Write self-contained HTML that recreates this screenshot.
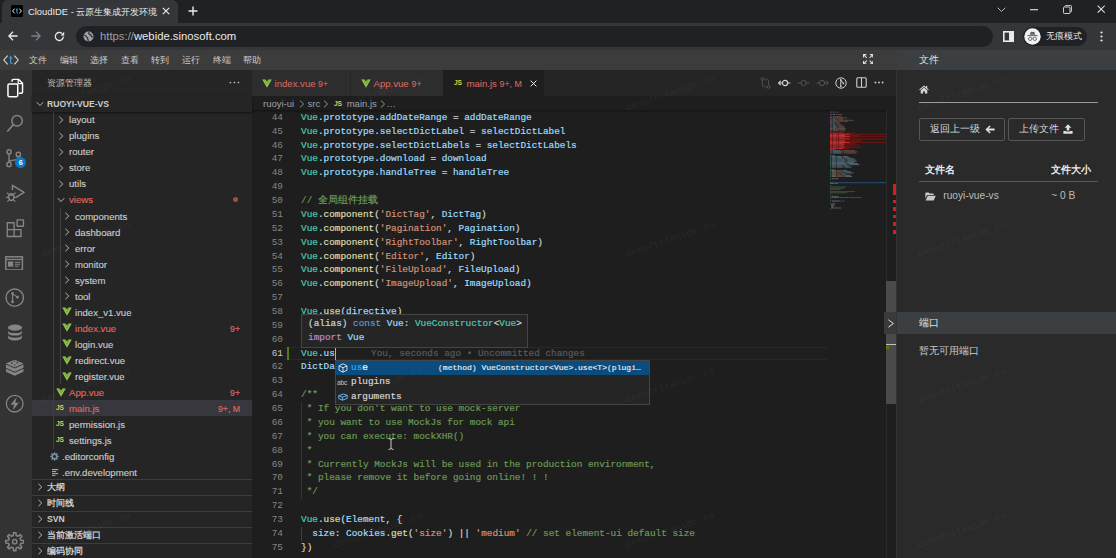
<!DOCTYPE html>
<html>
<head>
<meta charset="utf-8">
<title>CloudIDE</title>
<style>
*{box-sizing:border-box;margin:0;padding:0}
html,body{width:1116px;height:558px;overflow:hidden;background:#1e1e1e}
body{font-family:"Liberation Sans",sans-serif;color:#ccc;font-size:9.5px;position:relative}
.abs{position:absolute}
svg{display:block}
/* ---------- browser chrome ---------- */
#tabstrip{left:0;top:0;width:1116px;height:23px;background:#202124}
#tab{left:2px;top:0;width:176px;height:23px;background:#35363a;border-radius:6px 6px 0 0}
#tabtitle{left:28px;top:5px;width:130px;height:13px;line-height:13px;font-size:9.4px;color:#e8eaed;white-space:nowrap;overflow:hidden}
#toolbar{left:0;top:23px;width:1116px;height:27px;background:#35363a}
#omni{left:76px;top:26px;width:917px;height:21px;border-radius:10.5px;background:#202124}
#url{left:100px;top:29px;height:15px;line-height:15px;font-size:11.3px;color:#e8eaed;white-space:nowrap}
#url i{font-style:normal;color:#9aa0a6}
#incog{left:1023px;top:27px;width:64px;height:19px;border-radius:10px;background:#202124}
#incogtxt{left:1046px;top:30px;width:38px;height:13px;line-height:13px;font-size:8.8px;color:#e8eaed;white-space:nowrap;overflow:hidden}
/* ---------- IDE ---------- */
#menubar{left:0;top:50px;width:897px;height:20.4px;background:#3c3c3c;z-index:2}
.menu,.mz{z-index:3}
.menu{top:53px;height:14px;line-height:14px;font-size:9.4px;color:#ccc;width:20px;white-space:nowrap;overflow:hidden}
#activity{left:0;top:70px;width:32px;height:488px;background:#333333}
#sidebar{left:32px;top:70px;width:220px;height:488px;background:#252526}
#editor{left:252px;top:70px;width:645px;height:488px;background:#1e1e1e}
#rpanel{left:897px;top:50px;width:219px;height:508px;background:#2a2a2a}

.trow{height:16.05px;line-height:16.05px;font-size:9.6px;white-space:nowrap;-webkit-text-stroke:0.12px}
.tabt{top:77px;height:14px;line-height:14px;font-size:9.6px;white-space:nowrap}
.bc{top:97px;height:14px;line-height:14px;font-size:9.5px;color:#a0a0a0;white-space:nowrap}
.wm{height:12px;line-height:12px;font-family:"Liberation Mono",monospace;font-weight:bold;font-size:9.7px;color:rgba(255,255,255,.045);white-space:nowrap;transform-origin:0 100%;transform:rotate(-19deg);z-index:9;pointer-events:none}
.rt{white-space:nowrap;overflow:hidden}
.ln{left:252px;width:31px;text-align:right;height:13.87px;line-height:13.87px;font-family:"Liberation Mono",monospace;font-size:9.38px}
.cl{left:301px;height:13.87px;line-height:13.87px;font-family:"Liberation Mono",monospace;font-size:9.38px;white-space:pre;color:#d4d4d4;-webkit-text-stroke:0.2px}
.cl .t{color:#4ec9b0}.cl .v{color:#9cdcfe}.cl .f{color:#dcdcaa}.cl .s{color:#ce9178}.cl .c{color:#6a9955}.cl .k{color:#569cd6}.cl .p{color:#d4d4d4}.cl .i{color:#c586c0}
.cj{display:inline-block;width:63px;height:13.8px;overflow:hidden;vertical-align:top;font-size:10.4px}
</style>
</head>
<body>
<!-- browser chrome -->
<div id="tabstrip" class="abs"></div>
<div id="tab" class="abs"></div>
<div id="tabtitle" class="abs">CloudIDE - 云原生集成开发环境</div>
<div id="toolbar" class="abs"></div>
<div id="omni" class="abs"></div>
<div id="url" class="abs"><i>https://</i>webide.sinosoft.com</div>
<div id="incog" class="abs"></div>
<div id="incogtxt" class="abs">无痕模式</div>


<!-- chrome icons -->
<svg class="abs" style="left:11px;top:5px" width="12" height="12" viewBox="0 0 12 12"><rect width="12" height="12" rx="1.5" fill="#000"/><path d="M3.6 3.6 L1.6 6 L3.6 8.4 M8.4 3.6 L10.4 6 L8.4 8.4" stroke="#e8e8e8" stroke-width="1" fill="none"/><path d="M5.9 3.4 V7.2 Q5.9 8.3 7 8.2 M5 4.8 H7" stroke="#3a9ad9" stroke-width="1" fill="none"/></svg>
<svg class="abs" style="left:162px;top:7px" width="8" height="8" viewBox="0 0 8 8"><path d="M0.8 0.8 L7.2 7.2 M7.2 0.8 L0.8 7.2" stroke="#e8eaed" stroke-width="1.2" fill="none"/></svg>
<svg class="abs" style="left:188px;top:6px" width="10" height="10" viewBox="0 0 10 10"><path d="M5 0.5 V9.5 M0.5 5 H9.5" stroke="#e8eaed" stroke-width="1.4" fill="none"/></svg>
<!-- window controls -->
<svg class="abs" style="left:996.5px;top:6.8px" width="9" height="5.4" viewBox="0 0 10 6"><path d="M0.8 0.8 L5 5 L9.2 0.8" stroke="#c8cacc" stroke-width="1" fill="none"/></svg>
<svg class="abs" style="left:1030px;top:8.6px" width="8.4" height="2" viewBox="0 0 9 2"><rect width="9" height="1.3" fill="#d0d2d4"/></svg>
<svg class="abs" style="left:1063px;top:5px" width="9" height="9" viewBox="0 0 9 9"><path d="M2 1.8 V1.2 Q2 0.5 2.7 0.5 H7.8 Q8.5 0.5 8.5 1.2 V6.3 Q8.5 7 7.8 7 H7.2" stroke="#d0d2d4" stroke-width="0.9" fill="none"/><rect x="0.5" y="2" width="6.5" height="6.5" rx="0.8" stroke="#d0d2d4" stroke-width="1" fill="none"/></svg>
<svg class="abs" style="left:1097px;top:5px" width="8.4" height="8.4" viewBox="0 0 10 10"><path d="M0.8 0.8 L9.2 9.2 M9.2 0.8 L0.8 9.2" stroke="#e0e2e4" stroke-width="1.2" fill="none"/></svg>
<!-- nav -->
<svg class="abs" style="left:8px;top:31px" width="10" height="10" viewBox="0 0 10 10"><path d="M9.6 5 H1.2 M5 0.8 L0.8 5 L5 9.2" stroke="#e8eaed" stroke-width="1.3" fill="none"/></svg>
<svg class="abs" style="left:31px;top:31px" width="10" height="10" viewBox="0 0 10 10"><path d="M0.4 5 H8.8 M5 0.8 L9.2 5 L5 9.2" stroke="#7c7f84" stroke-width="1.3" fill="none"/></svg>
<svg class="abs" style="left:54px;top:31px" width="11" height="11" viewBox="0 0 11 11"><path d="M9.3 5.5 A4 4 0 1 1 8.1 2.6" stroke="#e8eaed" stroke-width="1.3" fill="none"/><path d="M10.2 0.8 V4.4 H6.6 Z" fill="#e8eaed"/></svg>
<svg class="abs" style="left:83px;top:31px" width="11" height="11" viewBox="0 0 11 11"><circle cx="5.5" cy="5.5" r="5" fill="#9aa0a6"/><path d="M1.2 4.2 Q3 4.6 3.6 6 Q4.6 6.2 4.8 7.6 Q4.6 9.2 5.6 10 M6.2 1 Q5 2.4 6.6 3.4 Q8.4 3.6 8.2 5.2 Q9 6.2 10 5.8" stroke="#202124" stroke-width="1.1" fill="none"/></svg>
<svg class="abs" style="left:1003px;top:31px" width="11" height="11" viewBox="0 0 11 11"><rect x="0.8" y="0.8" width="9.4" height="9.4" stroke="#e8eaed" stroke-width="1.6" fill="none"/><rect x="6" y="0.8" width="4.2" height="9.4" fill="#e8eaed"/></svg>
<svg class="abs" style="left:1024px;top:28px" width="17" height="17" viewBox="0 0 17 17"><circle cx="8.5" cy="8.5" r="8.2" fill="#f1f3f4"/><path d="M5.8 6.8 L6.6 4 Q6.8 3.5 7.3 3.7 L8.5 4.1 L9.7 3.7 Q10.2 3.5 10.4 4 L11.2 6.8 Z" fill="#5f6368"/><rect x="3.4" y="7.1" width="10.2" height="1" fill="#5f6368"/><circle cx="6.2" cy="10.8" r="1.7" stroke="#5f6368" stroke-width="0.9" fill="none"/><circle cx="10.8" cy="10.8" r="1.7" stroke="#5f6368" stroke-width="0.9" fill="none"/><path d="M7.8 10.5 Q8.5 10 9.2 10.5" stroke="#5f6368" stroke-width="0.8" fill="none"/></svg>
<svg class="abs" style="left:1100px;top:31px" width="3" height="11" viewBox="0 0 3 11"><circle cx="1.5" cy="1.5" r="1.1" fill="#e8eaed"/><circle cx="1.5" cy="5.5" r="1.1" fill="#e8eaed"/><circle cx="1.5" cy="9.5" r="1.1" fill="#e8eaed"/></svg>

<!-- IDE -->
<div id="menubar" class="abs"></div>
<div id="activity" class="abs"></div>
<div id="sidebar" class="abs"></div>
<div id="editor" class="abs"></div>
<div id="rpanel" class="abs"></div>
<div class="abs menu" style="left:29.0px">文件</div>
<div class="abs menu" style="left:59.6px">编辑</div>
<div class="abs menu" style="left:90.2px">选择</div>
<div class="abs menu" style="left:120.8px">查看</div>
<div class="abs menu" style="left:151.4px">转到</div>
<div class="abs menu" style="left:182.0px">运行</div>
<div class="abs menu" style="left:212.6px">终端</div>
<div class="abs menu" style="left:243.2px">帮助</div>
<svg class="abs mz" style="left:3px;top:54px" width="16" height="12" viewBox="0 0 16 12"><path d="M4.6 1.6 L0.8 6 L4.6 10.4 M11.4 1.6 L15.2 6 L11.4 10.4" stroke="#d8d8d8" stroke-width="1.1" fill="none"/><path d="M7.6 1.8 V8 Q7.6 9.8 9.6 9.4 M6.2 4 H9.4" stroke="#3a9ad9" stroke-width="1.2" fill="none"/></svg>
<svg class="abs mz" style="left:863px;top:53.6px" width="10.4" height="10.4" viewBox="0 0 11 11"><path d="M0.6 3.6 V0.6 H3.6 M7.4 0.6 H10.4 V3.6 M10.4 7.4 V10.4 H7.4 M3.6 10.4 H0.6 V7.4" stroke="#e0e0e0" stroke-width="1.2" fill="none"/><path d="M0.8 0.8 L4 4 M10.2 0.8 L7 4 M10.2 10.2 L7 7 M0.8 10.2 L4 7" stroke="#e0e0e0" stroke-width="1.1" fill="none"/></svg>
<div class="abs" style="left:47px;top:77px;width:46px;height:13px;line-height:13px;font-size:8.6px;color:#bbb;white-space:nowrap;overflow:hidden">资源管理器</div>
<svg class="abs" style="left:229px;top:81px" width="11" height="3" viewBox="0 0 11 3"><circle cx="1.4" cy="1.5" r="0.85" fill="#c5c5c5"/><circle cx="5.4" cy="1.5" r="0.85" fill="#c5c5c5"/><circle cx="9.4" cy="1.5" r="0.85" fill="#c5c5c5"/></svg>
<div class="abs" style="left:32px;top:96px;width:220px;height:15.5px;background:#252526;box-shadow:0 1px 2px rgba(0,0,0,.55)"></div>
<div class="abs" style="left:47px;top:97px;height:14px;line-height:14px;font-size:8.6px;font-weight:bold;color:#ccc;white-space:nowrap">RUOYI-VUE-VS</div>
<svg class="abs" style="left:36px;top:100px" width="8" height="8" viewBox="0 0 8 8"><path d="M0.8 2.2 L4 5.6 L7.2 2.2" stroke="#c5c5c5" stroke-width="0.9" fill="none"/></svg>
<svg class="abs" style="left:57px;top:115.5px" width="8" height="8" viewBox="0 0 8 8"><path d="M2.4 0.8 L5.8 4 L2.4 7.2" stroke="#c5c5c5" stroke-width="0.9" fill="none"/></svg>
<div class="abs trow" style="left:69px;top:112.2px;color:#cccccc">layout</div>
<svg class="abs" style="left:57px;top:131.6px" width="8" height="8" viewBox="0 0 8 8"><path d="M2.4 0.8 L5.8 4 L2.4 7.2" stroke="#c5c5c5" stroke-width="0.9" fill="none"/></svg>
<div class="abs trow" style="left:69px;top:128.2px;color:#cccccc">plugins</div>
<svg class="abs" style="left:57px;top:147.6px" width="8" height="8" viewBox="0 0 8 8"><path d="M2.4 0.8 L5.8 4 L2.4 7.2" stroke="#c5c5c5" stroke-width="0.9" fill="none"/></svg>
<div class="abs trow" style="left:69px;top:144.3px;color:#cccccc">router</div>
<svg class="abs" style="left:57px;top:163.7px" width="8" height="8" viewBox="0 0 8 8"><path d="M2.4 0.8 L5.8 4 L2.4 7.2" stroke="#c5c5c5" stroke-width="0.9" fill="none"/></svg>
<div class="abs trow" style="left:69px;top:160.3px;color:#cccccc">store</div>
<svg class="abs" style="left:57px;top:179.7px" width="8" height="8" viewBox="0 0 8 8"><path d="M2.4 0.8 L5.8 4 L2.4 7.2" stroke="#c5c5c5" stroke-width="0.9" fill="none"/></svg>
<div class="abs trow" style="left:69px;top:176.4px;color:#cccccc">utils</div>
<svg class="abs" style="left:57px;top:195.8px" width="8" height="8" viewBox="0 0 8 8"><path d="M0.8 2.2 L4 5.6 L7.2 2.2" stroke="#c5c5c5" stroke-width="0.9" fill="none"/></svg>
<div class="abs trow" style="left:69px;top:192.4px;color:#e2695f">views</div>
<div class="abs" style="left:233px;top:197.1px;width:5.4px;height:5.4px;border-radius:3px;background:#9b4f49"></div>
<svg class="abs" style="left:63px;top:211.8px" width="8" height="8" viewBox="0 0 8 8"><path d="M2.4 0.8 L5.8 4 L2.4 7.2" stroke="#c5c5c5" stroke-width="0.9" fill="none"/></svg>
<div class="abs trow" style="left:75px;top:208.5px;color:#cccccc">components</div>
<svg class="abs" style="left:63px;top:227.9px" width="8" height="8" viewBox="0 0 8 8"><path d="M2.4 0.8 L5.8 4 L2.4 7.2" stroke="#c5c5c5" stroke-width="0.9" fill="none"/></svg>
<div class="abs trow" style="left:75px;top:224.6px;color:#cccccc">dashboard</div>
<svg class="abs" style="left:63px;top:243.9px" width="8" height="8" viewBox="0 0 8 8"><path d="M2.4 0.8 L5.8 4 L2.4 7.2" stroke="#c5c5c5" stroke-width="0.9" fill="none"/></svg>
<div class="abs trow" style="left:75px;top:240.6px;color:#cccccc">error</div>
<svg class="abs" style="left:63px;top:260.0px" width="8" height="8" viewBox="0 0 8 8"><path d="M2.4 0.8 L5.8 4 L2.4 7.2" stroke="#c5c5c5" stroke-width="0.9" fill="none"/></svg>
<div class="abs trow" style="left:75px;top:256.7px;color:#cccccc">monitor</div>
<svg class="abs" style="left:63px;top:276.0px" width="8" height="8" viewBox="0 0 8 8"><path d="M2.4 0.8 L5.8 4 L2.4 7.2" stroke="#c5c5c5" stroke-width="0.9" fill="none"/></svg>
<div class="abs trow" style="left:75px;top:272.7px;color:#cccccc">system</div>
<svg class="abs" style="left:63px;top:292.1px" width="8" height="8" viewBox="0 0 8 8"><path d="M2.4 0.8 L5.8 4 L2.4 7.2" stroke="#c5c5c5" stroke-width="0.9" fill="none"/></svg>
<div class="abs trow" style="left:75px;top:288.8px;color:#cccccc">tool</div>
<svg class="abs" style="left:62px;top:307.3px" width="10" height="9" viewBox="0 0 10 9"><path d="M0.2 0.4 H3.6 L5 2.4 L6.4 0.4 H9.8 L5 8.8 Z" fill="#8dc149"/><path d="M2.4 0.4 L5 4.9 L7.6 0.4" stroke="#6b9a33" stroke-width="0.7" fill="none"/></svg>
<div class="abs trow" style="left:75px;top:304.8px;color:#cccccc">index_v1.vue</div>
<svg class="abs" style="left:62px;top:323.4px" width="10" height="9" viewBox="0 0 10 9"><path d="M0.2 0.4 H3.6 L5 2.4 L6.4 0.4 H9.8 L5 8.8 Z" fill="#8dc149"/><path d="M2.4 0.4 L5 4.9 L7.6 0.4" stroke="#6b9a33" stroke-width="0.7" fill="none"/></svg>
<div class="abs trow" style="left:75px;top:320.8px;color:#e2695f">index.vue</div>
<div class="abs trow" style="right:876px;top:320.8px;color:#e2695f;font-size:8.7px">9+</div>
<svg class="abs" style="left:62px;top:339.4px" width="10" height="9" viewBox="0 0 10 9"><path d="M0.2 0.4 H3.6 L5 2.4 L6.4 0.4 H9.8 L5 8.8 Z" fill="#8dc149"/><path d="M2.4 0.4 L5 4.9 L7.6 0.4" stroke="#6b9a33" stroke-width="0.7" fill="none"/></svg>
<div class="abs trow" style="left:75px;top:336.9px;color:#cccccc">login.vue</div>
<svg class="abs" style="left:62px;top:355.5px" width="10" height="9" viewBox="0 0 10 9"><path d="M0.2 0.4 H3.6 L5 2.4 L6.4 0.4 H9.8 L5 8.8 Z" fill="#8dc149"/><path d="M2.4 0.4 L5 4.9 L7.6 0.4" stroke="#6b9a33" stroke-width="0.7" fill="none"/></svg>
<div class="abs trow" style="left:75px;top:352.9px;color:#cccccc">redirect.vue</div>
<svg class="abs" style="left:62px;top:371.5px" width="10" height="9" viewBox="0 0 10 9"><path d="M0.2 0.4 H3.6 L5 2.4 L6.4 0.4 H9.8 L5 8.8 Z" fill="#8dc149"/><path d="M2.4 0.4 L5 4.9 L7.6 0.4" stroke="#6b9a33" stroke-width="0.7" fill="none"/></svg>
<div class="abs trow" style="left:75px;top:369.0px;color:#cccccc">register.vue</div>
<svg class="abs" style="left:56px;top:387.6px" width="10" height="9" viewBox="0 0 10 9"><path d="M0.2 0.4 H3.6 L5 2.4 L6.4 0.4 H9.8 L5 8.8 Z" fill="#8dc149"/><path d="M2.4 0.4 L5 4.9 L7.6 0.4" stroke="#6b9a33" stroke-width="0.7" fill="none"/></svg>
<div class="abs trow" style="left:69px;top:385.1px;color:#e2695f">App.vue</div>
<div class="abs trow" style="right:876px;top:385.1px;color:#e2695f;font-size:8.7px">9+</div>
<div class="abs" style="left:32px;top:400.4px;width:220px;height:16.05px;background:#37373d"></div>
<div class="abs" style="left:56px;top:403.0px;width:11px;height:10px;line-height:10px;font-size:7.7px;font-weight:bold;color:#d6cf45;letter-spacing:-0.3px;transform:scaleX(0.86);transform-origin:0 0">JS</div>
<div class="abs trow" style="left:69px;top:401.1px;color:#e2695f">main.js</div>
<div class="abs trow" style="right:876px;top:401.1px;color:#e2695f;font-size:8.7px">9+, M</div>
<div class="abs" style="left:56px;top:419.09999999999997px;width:11px;height:10px;line-height:10px;font-size:7.7px;font-weight:bold;color:#d6cf45;letter-spacing:-0.3px;transform:scaleX(0.86);transform-origin:0 0">JS</div>
<div class="abs trow" style="left:69px;top:417.1px;color:#cccccc">permission.js</div>
<div class="abs" style="left:56px;top:435.09999999999997px;width:11px;height:10px;line-height:10px;font-size:7.7px;font-weight:bold;color:#d6cf45;letter-spacing:-0.3px;transform:scaleX(0.86);transform-origin:0 0">JS</div>
<div class="abs trow" style="left:69px;top:433.2px;color:#cccccc">settings.js</div>
<svg class="abs" style="left:49.6px;top:452.0px" width="9" height="9" viewBox="0 0 9 9"><path d="M3.83 0.25 L5.17 0.25 L5.22 1.49 L6.12 1.86 L7.03 1.02 L7.98 1.97 L7.14 2.88 L7.51 3.78 L8.75 3.83 L8.75 5.17 L7.51 5.22 L7.14 6.12 L7.98 7.03 L7.03 7.98 L6.12 7.14 L5.22 7.51 L5.17 8.75 L3.83 8.75 L3.78 7.51 L2.88 7.14 L1.97 7.98 L1.02 7.03 L1.86 6.12 L1.49 5.22 L0.25 5.17 L0.25 3.83 L1.49 3.78 L1.86 2.88 L1.02 1.97 L1.97 1.02 L2.88 1.86 L3.78 1.49 Z M4.5 2.9 A1.6 1.6 0 1 0 4.51 2.9 Z" fill="#7494a4" fill-rule="evenodd"/></svg>
<div class="abs trow" style="left:62px;top:449.2px;color:#cccccc">.editorconfig</div>
<svg class="abs" style="left:52.2px;top:469.0px" width="7" height="7.4" viewBox="0 0 7 7.4"><path d="M0 0.6 H6.2 M0 2.6 H4.2 M0 4.7 H6.2 M0 6.7 H3.4" stroke="#c8c8c8" stroke-width="0.9" fill="none"/></svg>
<div class="abs trow" style="left:62px;top:465.3px;color:#cccccc">.env.development</div>
<div class="abs" style="left:53px;top:111.5px;width:1px;height:337px;background:#3f3f41"></div>
<div class="abs" style="left:60px;top:207.8px;width:1px;height:176.6px;background:#3f3f41"></div>
<div class="abs" style="left:32px;top:478.8px;width:220px;height:1px;background:#3c3c3d"></div>
<svg class="abs" style="left:36px;top:483.0px" width="8" height="8" viewBox="0 0 8 8"><path d="M2.4 0.8 L5.8 4 L2.4 7.2" stroke="#c5c5c5" stroke-width="0.9" fill="none"/></svg>
<div class="abs" style="left:47px;top:479.8px;height:15px;line-height:15px;width:19px;overflow:hidden;font-size:8.6px;font-weight:bold;color:#ccc;white-space:nowrap">大纲</div>
<div class="abs" style="left:32px;top:494.9px;width:220px;height:1px;background:#3c3c3d"></div>
<svg class="abs" style="left:36px;top:499.1px" width="8" height="8" viewBox="0 0 8 8"><path d="M2.4 0.8 L5.8 4 L2.4 7.2" stroke="#c5c5c5" stroke-width="0.9" fill="none"/></svg>
<div class="abs" style="left:47px;top:495.9px;height:15px;line-height:15px;width:28px;overflow:hidden;font-size:8.6px;font-weight:bold;color:#ccc;white-space:nowrap">时间线</div>
<div class="abs" style="left:32px;top:510.9px;width:220px;height:1px;background:#3c3c3d"></div>
<svg class="abs" style="left:36px;top:515.1px" width="8" height="8" viewBox="0 0 8 8"><path d="M2.4 0.8 L5.8 4 L2.4 7.2" stroke="#c5c5c5" stroke-width="0.9" fill="none"/></svg>
<div class="abs" style="left:47px;top:511.9px;height:15px;line-height:15px;width:32px;overflow:hidden;font-size:8.6px;font-weight:bold;color:#ccc;white-space:nowrap">SVN</div>
<div class="abs" style="left:32px;top:527.0px;width:220px;height:1px;background:#3c3c3d"></div>
<svg class="abs" style="left:36px;top:531.2px" width="8" height="8" viewBox="0 0 8 8"><path d="M2.4 0.8 L5.8 4 L2.4 7.2" stroke="#c5c5c5" stroke-width="0.9" fill="none"/></svg>
<div class="abs" style="left:47px;top:528.0px;height:15px;line-height:15px;width:54px;overflow:hidden;font-size:8.6px;font-weight:bold;color:#ccc;white-space:nowrap">当前激活端口</div>
<div class="abs" style="left:32px;top:543.0px;width:220px;height:1px;background:#3c3c3d"></div>
<svg class="abs" style="left:36px;top:547.2px" width="8" height="8" viewBox="0 0 8 8"><path d="M2.4 0.8 L5.8 4 L2.4 7.2" stroke="#c5c5c5" stroke-width="0.9" fill="none"/></svg>
<div class="abs" style="left:47px;top:544.0px;height:15px;line-height:15px;width:36px;overflow:hidden;font-size:8.6px;font-weight:bold;color:#ccc;white-space:nowrap">编码协同</div>
<svg class="abs" style="left:4.7px;top:77.7px" width="20.5" height="20.5" viewBox="0 0 18 18"><path d="M6.2 3.4 V2.2 Q6.2 1.2 7.2 1.2 H12 L15.4 4.6 V12.4 Q15.4 13.4 14.4 13.4 H12.2" stroke="#fff" stroke-width="1.3" fill="none"/><path d="M11.6 1.4 V5 H15.2" stroke="#fff" stroke-width="1.1" fill="none"/><rect x="2.6" y="5.2" width="8.6" height="11.2" rx="1.2" stroke="#fff" stroke-width="1.3" fill="none"/></svg>
<svg class="abs" style="left:4.7px;top:112.7px" width="20.5" height="20.5" viewBox="0 0 18 18"><circle cx="10.6" cy="6.8" r="4.6" stroke="#858585" stroke-width="1.3" fill="none"/><path d="M7.4 10.2 L2 16.2" stroke="#858585" stroke-width="1.4" fill="none"/></svg>
<svg class="abs" style="left:3.7px;top:147.7px" width="20.5" height="20.5" viewBox="0 0 18 18"><circle cx="4.4" cy="3.4" r="1.9" stroke="#858585" stroke-width="1.2" fill="none"/><circle cx="4.4" cy="14.4" r="1.9" stroke="#858585" stroke-width="1.2" fill="none"/><circle cx="12.6" cy="5.6" r="1.9" stroke="#858585" stroke-width="1.2" fill="none"/><path d="M4.4 5.3 V12.5 M12.6 7.5 Q12.6 10.4 9 10.6 Q4.6 10.8 4.4 12.4" stroke="#858585" stroke-width="1.2" fill="none"/></svg>
<div class="abs" style="left:15px;top:156.5px;width:11.4px;height:11.4px;border-radius:6px;background:#007acc;color:#fff;font-size:7.4px;font-weight:bold;line-height:11.4px;text-align:center">6</div>
<svg class="abs" style="left:3.6px;top:182.7px" width="22.8" height="20.5" viewBox="0 0 20 18"><path d="M7.4 6.2 V2 L17.6 8.2 L10.6 12.6" stroke="#858585" stroke-width="1.3" fill="none" stroke-linejoin="round"/><ellipse cx="6.4" cy="12.4" rx="2.3" ry="3" stroke="#858585" stroke-width="1.2" fill="none"/><path d="M4.4 10 L2.6 8.6 M8.4 10 L10.2 8.6 M4.1 12.6 H1.8 M8.7 12.6 H11 M4.6 14.8 L2.8 16.4 M8.2 14.8 L10 16.4 M4.6 10.6 H8.2" stroke="#858585" stroke-width="1" fill="none"/></svg>
<svg class="abs" style="left:4.9px;top:217.7px" width="20.5" height="20.5" viewBox="0 0 18 18"><path d="M2 10.2 H14 V16.2 H2 Z M8 10.2 V16.2 M2 10.2 V4.2 H8 V10.2" stroke="#858585" stroke-width="1.2" fill="none"/><rect x="10.6" y="1.6" width="5.6" height="5.6" rx="0.5" stroke="#858585" stroke-width="1.2" fill="none"/></svg>
<svg class="abs" style="left:5.4px;top:255.6px" width="18.2" height="14.8" viewBox="0 0 16 13"><rect x="0.7" y="0.7" width="14.6" height="11.6" stroke="#858585" stroke-width="1.3" fill="none"/><path d="M0.7 3 H15.3" stroke="#858585" stroke-width="1.1"/><rect x="2.6" y="4.8" width="4.6" height="4.6" fill="#858585"/><path d="M8.6 5.4 H13.4 M8.6 7.2 H13.4 M8.6 9 H12" stroke="#858585" stroke-width="0.9"/></svg>
<svg class="abs" style="left:4.8px;top:288.3px" width="19.4" height="19.4" viewBox="0 0 17 17"><circle cx="8.5" cy="8.5" r="7.6" stroke="#858585" stroke-width="1.2" fill="none"/><circle cx="6.6" cy="4.8" r="1.2" fill="#858585"/><circle cx="6.6" cy="12.2" r="1.2" fill="#858585"/><circle cx="11" cy="8" r="1.2" fill="#858585"/><path d="M6.6 4.8 V12.2 M6.6 5.2 L11 8" stroke="#858585" stroke-width="1" fill="none"/></svg>
<svg class="abs" style="left:6.5px;top:324.4px" width="16.0" height="17.1" viewBox="0 0 14 15"><ellipse cx="7" cy="3.2" rx="6.2" ry="2.7" fill="#858585"/><path d="M0.8 5.2 Q0.8 8 7 8 Q13.2 8 13.2 5.2 V7.2 Q13.2 10.2 7 10.2 Q0.8 10.2 0.8 7.2 Z" fill="#858585"/><path d="M0.8 9.2 Q0.8 12 7 12 Q13.2 12 13.2 9.2 V11.4 Q13.2 14.4 7 14.4 Q0.8 14.4 0.8 11.4 Z" fill="#858585"/></svg>
<svg class="abs" style="left:5.0px;top:359.4px" width="19.4" height="17.1" viewBox="0 0 17 15"><path d="M8.5 0.6 L16.2 3.9 L8.5 7.4 L0.8 3.9 Z" fill="#858585"/><path d="M0.8 4.9 L8.5 8.4 L16.2 4.9 V7.6 L8.5 11.1 L0.8 7.6 Z" fill="#858585"/><path d="M0.8 8.6 L8.5 12.1 L16.2 8.6 V11.2 L8.5 14.7 L0.8 11.2 Z" fill="#858585"/><circle cx="6" cy="3.7" r="0.8" fill="#444"/><circle cx="10.8" cy="3.3" r="0.8" fill="#444"/><circle cx="8.6" cy="5.2" r="0.7" fill="#444"/><circle cx="8.4" cy="2" r="0.6" fill="#444"/></svg>
<svg class="abs" style="left:5.2px;top:393.6px" width="19.4" height="19.4" viewBox="0 0 17 17"><circle cx="8.5" cy="8.5" r="7.3" stroke="#858585" stroke-width="1.15" fill="none"/><path d="M10.2 2.8 L4.8 9.4 H8 L6.8 14.2 L12.2 7.6 H9 Z" fill="#858585"/></svg>
<svg class="abs" style="left:5.1px;top:532.3px" width="19.4" height="19.4" viewBox="0 0 17 17"><path d="M7.45 0.67 L9.55 0.67 L9.81 3.05 L11.43 3.73 L13.29 2.22 L14.78 3.71 L13.27 5.57 L13.95 7.19 L16.33 7.45 L16.33 9.55 L13.95 9.81 L13.27 11.43 L14.78 13.29 L13.29 14.78 L11.43 13.27 L9.81 13.95 L9.55 16.33 L7.45 16.33 L7.19 13.95 L5.57 13.27 L3.71 14.78 L2.22 13.29 L3.73 11.43 L3.05 9.81 L0.67 9.55 L0.67 7.45 L3.05 7.19 L3.73 5.57 L2.22 3.71 L3.71 2.22 L5.57 3.73 L7.19 3.05 Z" stroke="#858585" stroke-width="1.35" fill="none" stroke-linejoin="round"/><circle cx="8.5" cy="8.5" r="1.9" stroke="#858585" stroke-width="1.25" fill="none"/></svg>
<div class="abs" style="left:252px;top:70px;width:645px;height:26px;background:#252526"></div>
<div class="abs" style="left:252px;top:70px;width:98.5px;height:26px;background:#2d2d2d;border-right:1px solid #252526"></div>
<div class="abs" style="left:350.5px;top:70px;width:93px;height:26px;background:#2d2d2d;border-right:1px solid #252526"></div>
<div class="abs" style="left:443px;top:70px;width:101px;height:26px;background:#1e1e1e"></div>
<svg class="abs" style="left:262px;top:78.5px" width="10" height="9" viewBox="0 0 10 9"><path d="M0.2 0.4 H3.6 L5 2.4 L6.4 0.4 H9.8 L5 8.8 Z" fill="#8dc149"/><path d="M2.4 0.4 L5 4.9 L7.6 0.4" stroke="#6b9a33" stroke-width="0.7" fill="none"/></svg>
<div class="abs tabt" style="left:274.5px;color:#dd6b60">index.vue</div><div class="abs tabt" style="left:318px;color:#dd6b60;font-size:8.8px">9+</div>
<svg class="abs" style="left:361px;top:78.5px" width="10" height="9" viewBox="0 0 10 9"><path d="M0.2 0.4 H3.6 L5 2.4 L6.4 0.4 H9.8 L5 8.8 Z" fill="#8dc149"/><path d="M2.4 0.4 L5 4.9 L7.6 0.4" stroke="#6b9a33" stroke-width="0.7" fill="none"/></svg>
<div class="abs tabt" style="left:373.5px;color:#dd6b60">App.vue</div><div class="abs tabt" style="left:411.5px;color:#dd6b60;font-size:8.8px">9+</div>
<div class="abs" style="left:454px;top:77.9px;width:11px;height:10px;line-height:10px;font-size:7.7px;font-weight:bold;color:#d6cf45;letter-spacing:-0.3px;transform:scaleX(0.86);transform-origin:0 0">JS</div>
<div class="abs tabt" style="left:466.5px;color:#e2695f">main.js</div><div class="abs tabt" style="left:499.5px;color:#e2695f;font-size:8.8px">9+, M</div>
<svg class="abs" style="left:529.5px;top:79.5px" width="7" height="7" viewBox="0 0 7 7"><path d="M0.6 0.6 L6.4 6.4 M6.4 0.6 L0.6 6.4" stroke="#e8e8e8" stroke-width="1" fill="none"/></svg>
<svg class="abs" style="left:759.7px;top:76.5px" width="11" height="12" viewBox="0 0 11 12"><circle cx="2.4" cy="2" r="1.4" stroke="#555555" stroke-width="0.9" fill="none"/><circle cx="8.6" cy="10" r="1.4" stroke="#555555" stroke-width="0.9" fill="none"/><path d="M2.4 3.4 V8 Q2.4 10 4.6 10 M8.6 8.6 V4 Q8.6 2 6.4 2 M5.6 0.8 L4.4 2 L5.6 3.2 M5.4 8.8 L6.6 10 L5.4 11.2" stroke="#555555" stroke-width="0.9" fill="none"/></svg>
<svg class="abs" style="left:777.8px;top:78.5px" width="13" height="8" viewBox="0 0 13 8"><circle cx="7" cy="4" r="2.6" stroke="#d0d0d0" stroke-width="1.2" fill="none"/><path d="M0.8 4 H4.4 M9.6 4 H12.4 M2.8 1.8 L0.6 4 L2.8 6.2" stroke="#d0d0d0" stroke-width="1.1" fill="none"/></svg>
<svg class="abs" style="left:796.9px;top:78.5px" width="13" height="8" viewBox="0 0 13 8"><circle cx="6.5" cy="4" r="2.6" stroke="#555555" stroke-width="1" fill="none"/><path d="M0.6 4 H3.9 M9.1 4 H12.4" stroke="#555555" stroke-width="1" fill="none"/></svg>
<svg class="abs" style="left:815.5px;top:78.5px" width="13" height="8" viewBox="0 0 13 8"><circle cx="6" cy="4" r="2.6" stroke="#555555" stroke-width="1" fill="none"/><path d="M0.6 4 H3.4 M8.6 4 H12.2 M10.2 1.8 L12.4 4 L10.2 6.2" stroke="#555555" stroke-width="1" fill="none"/></svg>
<svg class="abs" style="left:835.4px;top:76.5px" width="12" height="12" viewBox="0 0 12 12"><circle cx="6" cy="6" r="5.2" stroke="#d0d0d0" stroke-width="1" fill="none"/><path d="M5.8 2.4 V9.6 M5.8 3 L8.4 6.4" stroke="#d0d0d0" stroke-width="1" fill="none"/><circle cx="5.8" cy="2.8" r="0.8" fill="#d0d0d0"/><circle cx="5.8" cy="9.4" r="0.8" fill="#d0d0d0"/><circle cx="8.4" cy="6.4" r="0.8" fill="#d0d0d0"/></svg>
<svg class="abs" style="left:855.5px;top:77.0px" width="11" height="11" viewBox="0 0 11 11"><rect x="0.8" y="0.8" width="9.4" height="9.4" rx="1" stroke="#d0d0d0" stroke-width="1.1" fill="none"/><path d="M5.5 0.8 V10.2" stroke="#d0d0d0" stroke-width="1.1"/></svg>
<svg class="abs" style="left:874.0px;top:81.3px" width="10" height="3" viewBox="0 0 10 3"><circle cx="1.4" cy="1.5" r="0.9" fill="#d0d0d0"/><circle cx="5" cy="1.5" r="0.9" fill="#d0d0d0"/><circle cx="8.6" cy="1.5" r="0.9" fill="#d0d0d0"/></svg>
<div class="abs bc" style="left:263px">ruoyi-ui</div>
<svg class="abs" style="left:298px;top:100.3px" width="8" height="8" viewBox="0 0 8 8"><path d="M2 0.6 L5.6 4 L2 7.4" stroke="#a0a0a0" stroke-width="0.9" fill="none"/></svg>
<div class="abs bc" style="left:307.5px">src</div>
<svg class="abs" style="left:321.5px;top:100.3px" width="8" height="8" viewBox="0 0 8 8"><path d="M2 0.6 L5.6 4 L2 7.4" stroke="#a0a0a0" stroke-width="0.9" fill="none"/></svg>
<div class="abs" style="left:334px;top:99.2px;width:11px;height:10px;line-height:10px;font-size:7.7px;font-weight:bold;color:#d6cf45;letter-spacing:-0.3px;transform:scaleX(0.86);transform-origin:0 0">JS</div>
<div class="abs bc" style="left:346.7px">main.js</div>
<svg class="abs" style="left:378.5px;top:100.3px" width="8" height="8" viewBox="0 0 8 8"><path d="M2 0.6 L5.6 4 L2 7.4" stroke="#a0a0a0" stroke-width="0.9" fill="none"/></svg>
<div class="abs bc" style="left:386.5px">…</div>
<div class="abs" style="left:252px;top:110px;width:634px;height:3px;background:linear-gradient(rgba(0,0,0,.35) 0,rgba(0,0,0,0) 100%)"></div>
<div class="abs" style="left:289px;top:346.6px;width:538px;height:13.87px;border-top:1px solid #282828;border-bottom:1px solid #282828"></div>
<div class="abs" style="left:287px;top:346.6px;width:2px;height:13.87px;background:#587c0c"></div>
<div class="abs ln" style="top:110.80px;color:#858585">44</div>
<div class="abs cl" style="top:110.80px"><span class="t">Vue</span><span class="p">.</span><span class="v">prototype</span><span class="p">.</span><span class="v">addDateRange</span><span class="p"> = </span><span class="v">addDateRange</span></div>
<div class="abs ln" style="top:124.67px;color:#858585">45</div>
<div class="abs cl" style="top:124.67px"><span class="t">Vue</span><span class="p">.</span><span class="v">prototype</span><span class="p">.</span><span class="v">selectDictLabel</span><span class="p"> = </span><span class="v">selectDictLabel</span></div>
<div class="abs ln" style="top:138.54px;color:#858585">46</div>
<div class="abs cl" style="top:138.54px"><span class="t">Vue</span><span class="p">.</span><span class="v">prototype</span><span class="p">.</span><span class="v">selectDictLabels</span><span class="p"> = </span><span class="v">selectDictLabels</span></div>
<div class="abs ln" style="top:152.41px;color:#858585">47</div>
<div class="abs cl" style="top:152.41px"><span class="t">Vue</span><span class="p">.</span><span class="v">prototype</span><span class="p">.</span><span class="v">download</span><span class="p"> = </span><span class="v">download</span></div>
<div class="abs ln" style="top:166.28px;color:#858585">48</div>
<div class="abs cl" style="top:166.28px"><span class="t">Vue</span><span class="p">.</span><span class="v">prototype</span><span class="p">.</span><span class="v">handleTree</span><span class="p"> = </span><span class="v">handleTree</span></div>
<div class="abs ln" style="top:180.15px;color:#858585">49</div>
<div class="abs ln" style="top:194.02px;color:#858585">50</div>
<div class="abs cl" style="top:194.02px"><span class="c">// <span class="cj">全局组件挂载</span></span></div>
<div class="abs ln" style="top:207.89px;color:#858585">51</div>
<div class="abs cl" style="top:207.89px"><span class="t">Vue</span><span class="p">.</span><span class="f">component</span><span class="p">(</span><span class="s">'DictTag'</span><span class="p">, </span><span class="v">DictTag</span><span class="p">)</span></div>
<div class="abs ln" style="top:221.76px;color:#858585">52</div>
<div class="abs cl" style="top:221.76px"><span class="t">Vue</span><span class="p">.</span><span class="f">component</span><span class="p">(</span><span class="s">'Pagination'</span><span class="p">, </span><span class="v">Pagination</span><span class="p">)</span></div>
<div class="abs ln" style="top:235.63px;color:#858585">53</div>
<div class="abs cl" style="top:235.63px"><span class="t">Vue</span><span class="p">.</span><span class="f">component</span><span class="p">(</span><span class="s">'RightToolbar'</span><span class="p">, </span><span class="v">RightToolbar</span><span class="p">)</span></div>
<div class="abs ln" style="top:249.50px;color:#858585">54</div>
<div class="abs cl" style="top:249.50px"><span class="t">Vue</span><span class="p">.</span><span class="f">component</span><span class="p">(</span><span class="s">'Editor'</span><span class="p">, </span><span class="v">Editor</span><span class="p">)</span></div>
<div class="abs ln" style="top:263.37px;color:#858585">55</div>
<div class="abs cl" style="top:263.37px"><span class="t">Vue</span><span class="p">.</span><span class="f">component</span><span class="p">(</span><span class="s">'FileUpload'</span><span class="p">, </span><span class="v">FileUpload</span><span class="p">)</span></div>
<div class="abs ln" style="top:277.24px;color:#858585">56</div>
<div class="abs cl" style="top:277.24px"><span class="t">Vue</span><span class="p">.</span><span class="f">component</span><span class="p">(</span><span class="s">'ImageUpload'</span><span class="p">, </span><span class="v">ImageUpload</span><span class="p">)</span></div>
<div class="abs ln" style="top:291.11px;color:#858585">57</div>
<div class="abs ln" style="top:304.98px;color:#858585">58</div>
<div class="abs cl" style="top:304.98px"><span class="t">Vue</span><span class="p">.</span><span class="f">use</span><span class="p">(</span><span class="v">directive</span><span class="p">)</span></div>
<div class="abs ln" style="top:318.85px;color:#858585">59</div>
<div class="abs ln" style="top:332.72px;color:#858585">60</div>
<div class="abs ln" style="top:346.59px;color:#c6c6c6">61</div>
<div class="abs cl" style="top:346.59px"><span class="t">Vue</span><span class="p">.</span><span class="v">us</span></div>
<div class="abs ln" style="top:360.46px;color:#858585">62</div>
<div class="abs cl" style="top:360.46px"><span class="v">DictData</span><span class="p">.</span><span class="f">install</span><span class="p">()</span></div>
<div class="abs ln" style="top:374.33px;color:#858585">63</div>
<div class="abs ln" style="top:388.20px;color:#858585">64</div>
<div class="abs cl" style="top:388.20px"><span class="c">/**</span></div>
<div class="abs ln" style="top:402.07px;color:#858585">65</div>
<div class="abs cl" style="top:402.07px"><span class="c"> * If you don't want to use mock-server</span></div>
<div class="abs ln" style="top:415.94px;color:#858585">66</div>
<div class="abs cl" style="top:415.94px"><span class="c"> * you want to use MockJs for mock api</span></div>
<div class="abs ln" style="top:429.81px;color:#858585">67</div>
<div class="abs cl" style="top:429.81px"><span class="c"> * you can execute: mockXHR()</span></div>
<div class="abs ln" style="top:443.68px;color:#858585">68</div>
<div class="abs cl" style="top:443.68px"><span class="c"> *</span></div>
<div class="abs ln" style="top:457.55px;color:#858585">69</div>
<div class="abs cl" style="top:457.55px"><span class="c"> * Currently MockJs will be used in the production environment,</span></div>
<div class="abs ln" style="top:471.42px;color:#858585">70</div>
<div class="abs cl" style="top:471.42px"><span class="c"> * please remove it before going online! ! !</span></div>
<div class="abs ln" style="top:485.29px;color:#858585">71</div>
<div class="abs cl" style="top:485.29px"><span class="c"> */</span></div>
<div class="abs ln" style="top:499.16px;color:#858585">72</div>
<div class="abs ln" style="top:513.03px;color:#858585">73</div>
<div class="abs cl" style="top:513.03px"><span class="t">Vue</span><span class="p">.</span><span class="f">use</span><span class="p">(</span><span class="v">Element</span><span class="p">, {</span></div>
<div class="abs ln" style="top:526.90px;color:#858585">74</div>
<div class="abs cl" style="top:526.90px"><span class="p">  </span><span class="v">size</span><span class="p">: </span><span class="v">Cookies</span><span class="p">.</span><span class="f">get</span><span class="p">(</span><span class="s">'size'</span><span class="p">) || </span><span class="s">'medium'</span><span class="p"> </span><span class="c">// set element-ui default size</span></div>
<div class="abs ln" style="top:540.77px;color:#858585">75</div>
<div class="abs cl" style="top:540.77px"><span class="p">})</span></div>
<div class="abs" style="left:334.8px;top:347.6px;width:1px;height:12px;background:#aeafad"></div>
<div class="abs cl" style="left:371px;top:346.59px;color:#5a5a5a">You, seconds ago • Uncommitted changes</div>
<div class="abs" style="left:301px;top:402.1px;width:1px;height:97.1px;background:#333"></div>
<div class="abs" style="left:301px;top:526.9px;width:1px;height:13.9px;background:#404040"></div>
<div class="abs" style="left:301px;top:313.5px;width:226.5px;height:34px;background:#252526;border:1px solid #454545"></div>
<div class="abs cl" style="left:308px;top:317.3px"><span class="p">(alias) </span><span class="k">const</span> <span class="v">Vue</span><span class="p">: </span><span class="t">VueConstructor</span><span class="p">&lt;</span><span class="t">Vue</span><span class="p">&gt;</span></div>
<div class="abs cl" style="left:308px;top:331.4px"><span class="i">import</span> <span class="v">Vue</span></div>
<div class="abs" style="left:335px;top:360.3px;width:315px;height:44.8px;background:#252526;border:1px solid #454545"></div>
<div class="abs" style="left:336px;top:361.3px;width:313px;height:14px;background:#0a4c7d"></div>
<svg class="abs" style="left:337.5px;top:363.3px" width="10" height="10" viewBox="0 0 10 10"><path d="M5 0.8 L9 2.8 V7.2 L5 9.2 L1 7.2 V2.8 Z M1 2.8 L5 4.8 L9 2.8 M5 4.8 V9.2" stroke="#e8e8e8" stroke-width="0.9" fill="none" stroke-linejoin="round"/></svg>
<div class="abs cl" style="left:351px;top:361.4px;color:#fff"><span style="color:#2aaaff">us</span>e</div>
<div class="abs cl" style="left:438px;top:361.2px;color:#e6e6e6;font-size:8.05px">(method) VueConstructor&lt;Vue&gt;.use&lt;T&gt;(plugi…</div>
<div class="abs" style="left:337px;top:376.8px;font-size:6.6px;line-height:12px;height:12px;color:#c5c5c5;letter-spacing:-0.2px">abc</div>
<div class="abs cl" style="left:351px;top:375.4px;color:#d4d4d4">plugins</div>
<svg class="abs" style="left:337.5px;top:391.8px" width="10" height="10" viewBox="0 0 10 10"><path d="M0.8 3.6 L5.6 2 L9.2 3.4 V6.4 L4.4 8.2 L0.8 6.6 Z M0.8 3.6 L4.4 5.2 L9.2 3.4 M4.4 5.2 V8.2" stroke="#75beff" stroke-width="0.9" fill="none" stroke-linejoin="round"/></svg>
<div class="abs cl" style="left:351px;top:389.9px;color:#d4d4d4">arguments</div>
<svg class="abs" style="left:387.5px;top:437.5px" width="6" height="12" viewBox="0 0 6 12"><path d="M0.5 0.6 Q2.2 0.6 3 1.6 Q3.8 0.6 5.5 0.6 M3 1.6 V10.4 M0.5 11.4 Q2.2 11.4 3 10.4 Q3.8 11.4 5.5 11.4" stroke="#e0e0e0" stroke-width="0.9" fill="none"/></svg>
<svg class="abs" style="left:0;top:0" width="1116" height="558" viewBox="0 0 1116 558" ><rect x="830.0" y="111.60" width="2.0" height="0.95" fill="#9a6a98" opacity="0.55"/><rect x="832.6" y="111.60" width="1.3" height="0.95" fill="#7aa9c4" opacity="0.55"/><rect x="834.5" y="111.60" width="1.3" height="0.95" fill="#9a6a98" opacity="0.55"/><rect x="836.4" y="111.60" width="2.0" height="0.95" fill="#a0725f" opacity="0.55"/><rect x="830.0" y="113.94" width="2.0" height="0.95" fill="#9a6a98" opacity="0.55"/><rect x="832.6" y="113.94" width="2.6" height="0.95" fill="#7aa9c4" opacity="0.55"/><rect x="835.8" y="113.94" width="1.3" height="0.95" fill="#9a6a98" opacity="0.55"/><rect x="837.7" y="113.94" width="4.6" height="0.95" fill="#a0725f" opacity="0.55"/><rect x="830.0" y="116.28" width="2.0" height="0.95" fill="#9a6a98" opacity="0.55"/><rect x="832.6" y="116.28" width="9.2" height="0.95" fill="#a0725f" opacity="0.55"/><rect x="830.0" y="117.45" width="2.0" height="0.95" fill="#9a6a98" opacity="0.55"/><rect x="832.6" y="117.45" width="14.5" height="0.95" fill="#a0725f" opacity="0.55"/><rect x="830.0" y="118.62" width="2.0" height="0.95" fill="#9a6a98" opacity="0.55"/><rect x="832.6" y="118.62" width="2.6" height="0.95" fill="#7aa9c4" opacity="0.55"/><rect x="835.8" y="118.62" width="1.3" height="0.95" fill="#9a6a98" opacity="0.55"/><rect x="837.7" y="118.62" width="5.3" height="0.95" fill="#a0725f" opacity="0.55"/><rect x="830.0" y="119.79" width="2.0" height="0.95" fill="#9a6a98" opacity="0.55"/><rect x="832.6" y="119.79" width="4.0" height="0.95" fill="#7aa9c4" opacity="0.55"/><rect x="837.1" y="119.79" width="1.3" height="0.95" fill="#9a6a98" opacity="0.55"/><rect x="839.1" y="119.79" width="14.5" height="0.95" fill="#a0725f" opacity="0.55"/><rect x="830.0" y="120.96" width="2.0" height="0.95" fill="#9a6a98" opacity="0.55"/><rect x="832.6" y="120.96" width="11.9" height="0.95" fill="#557a46" opacity="0.55"/><rect x="845.1" y="120.96" width="2.6" height="0.95" fill="#a0725f" opacity="0.55"/><rect x="830.0" y="122.13" width="2.0" height="0.95" fill="#9a6a98" opacity="0.55"/><rect x="832.6" y="122.13" width="1.3" height="0.95" fill="#7aa9c4" opacity="0.55"/><rect x="834.5" y="122.13" width="1.3" height="0.95" fill="#9a6a98" opacity="0.55"/><rect x="836.4" y="122.13" width="2.6" height="0.95" fill="#a0725f" opacity="0.55"/><rect x="830.0" y="123.30" width="2.0" height="0.95" fill="#9a6a98" opacity="0.55"/><rect x="832.6" y="123.30" width="2.0" height="0.95" fill="#7aa9c4" opacity="0.55"/><rect x="835.2" y="123.30" width="1.3" height="0.95" fill="#9a6a98" opacity="0.55"/><rect x="837.1" y="123.30" width="3.3" height="0.95" fill="#a0725f" opacity="0.55"/><rect x="830.0" y="124.47" width="2.0" height="0.95" fill="#9a6a98" opacity="0.55"/><rect x="832.6" y="124.47" width="2.6" height="0.95" fill="#7aa9c4" opacity="0.55"/><rect x="835.8" y="124.47" width="1.3" height="0.95" fill="#9a6a98" opacity="0.55"/><rect x="837.7" y="124.47" width="4.0" height="0.95" fill="#a0725f" opacity="0.55"/><rect x="830.0" y="125.64" width="2.0" height="0.95" fill="#9a6a98" opacity="0.55"/><rect x="832.6" y="125.64" width="3.3" height="0.95" fill="#7aa9c4" opacity="0.55"/><rect x="836.5" y="125.64" width="1.3" height="0.95" fill="#9a6a98" opacity="0.55"/><rect x="838.4" y="125.64" width="5.9" height="0.95" fill="#a0725f" opacity="0.55"/><rect x="830.0" y="126.81" width="2.0" height="0.95" fill="#9a6a98" opacity="0.55"/><rect x="832.6" y="126.81" width="4.0" height="0.95" fill="#7aa9c4" opacity="0.55"/><rect x="837.1" y="126.81" width="1.3" height="0.95" fill="#9a6a98" opacity="0.55"/><rect x="839.1" y="126.81" width="5.3" height="0.95" fill="#a0725f" opacity="0.55"/><rect x="830.0" y="127.98" width="2.0" height="0.95" fill="#9a6a98" opacity="0.55"/><rect x="832.6" y="127.98" width="2.6" height="0.95" fill="#7aa9c4" opacity="0.55"/><rect x="835.8" y="127.98" width="1.3" height="0.95" fill="#9a6a98" opacity="0.55"/><rect x="837.7" y="127.98" width="7.9" height="0.95" fill="#a0725f" opacity="0.55"/><rect x="830.0" y="129.15" width="2.0" height="0.95" fill="#9a6a98" opacity="0.55"/><rect x="832.6" y="129.15" width="6.6" height="0.95" fill="#a0725f" opacity="0.55"/><rect x="839.8" y="129.15" width="5.3" height="0.95" fill="#557a46" opacity="0.55"/><rect x="830.0" y="130.32" width="2.0" height="0.95" fill="#9a6a98" opacity="0.55"/><rect x="832.6" y="130.32" width="5.9" height="0.95" fill="#a0725f" opacity="0.55"/><rect x="839.1" y="130.32" width="6.6" height="0.95" fill="#557a46" opacity="0.55"/><rect x="830" y="132.56" width="25.8" height="1.17" fill="#6a1414"/><rect x="830.0" y="132.66" width="2.0" height="0.95" fill="#d83a3a" opacity="0.85"/><rect x="832.6" y="132.66" width="4.0" height="0.95" fill="#d83a3a" opacity="0.85"/><rect x="837.1" y="132.66" width="1.3" height="0.95" fill="#d83a3a" opacity="0.85"/><rect x="839.1" y="132.66" width="4.6" height="0.95" fill="#d83a3a" opacity="0.85"/><rect x="830" y="133.73" width="56.0" height="1.17" fill="#6a1414"/><rect x="830.0" y="133.83" width="2.0" height="0.95" fill="#d83a3a" opacity="0.85"/><rect x="832.6" y="133.83" width="4.0" height="0.95" fill="#d83a3a" opacity="0.85"/><rect x="837.1" y="133.83" width="1.3" height="0.95" fill="#d83a3a" opacity="0.85"/><rect x="839.1" y="133.83" width="10.6" height="0.95" fill="#d83a3a" opacity="0.85"/><rect x="830" y="134.90" width="31.0" height="1.17" fill="#6a1414"/><rect x="830.0" y="135.00" width="2.0" height="0.95" fill="#d83a3a" opacity="0.85"/><rect x="832.6" y="135.00" width="4.0" height="0.95" fill="#d83a3a" opacity="0.85"/><rect x="837.1" y="135.00" width="1.3" height="0.95" fill="#d83a3a" opacity="0.85"/><rect x="839.1" y="135.00" width="5.9" height="0.95" fill="#d83a3a" opacity="0.85"/><rect x="830" y="136.07" width="56.0" height="1.17" fill="#6a1414"/><rect x="830.0" y="136.17" width="2.0" height="0.95" fill="#d83a3a" opacity="0.85"/><rect x="832.6" y="136.17" width="4.0" height="0.95" fill="#d83a3a" opacity="0.85"/><rect x="837.1" y="136.17" width="1.3" height="0.95" fill="#d83a3a" opacity="0.85"/><rect x="839.1" y="136.17" width="10.6" height="0.95" fill="#d83a3a" opacity="0.85"/><rect x="830" y="137.24" width="29.2" height="1.17" fill="#6a1414"/><rect x="830.0" y="137.34" width="2.0" height="0.95" fill="#d83a3a" opacity="0.85"/><rect x="832.6" y="137.34" width="4.0" height="0.95" fill="#d83a3a" opacity="0.85"/><rect x="837.1" y="137.34" width="1.3" height="0.95" fill="#d83a3a" opacity="0.85"/><rect x="839.1" y="137.34" width="5.3" height="0.95" fill="#d83a3a" opacity="0.85"/><rect x="830" y="138.41" width="56.0" height="1.17" fill="#6a1414"/><rect x="830.0" y="138.51" width="2.0" height="0.95" fill="#d83a3a" opacity="0.85"/><rect x="832.6" y="138.51" width="4.0" height="0.95" fill="#d83a3a" opacity="0.85"/><rect x="837.1" y="138.51" width="1.3" height="0.95" fill="#d83a3a" opacity="0.85"/><rect x="839.1" y="138.51" width="10.6" height="0.95" fill="#d83a3a" opacity="0.85"/><rect x="830" y="139.58" width="32.7" height="1.17" fill="#6a1414"/><rect x="830.0" y="139.68" width="2.0" height="0.95" fill="#d83a3a" opacity="0.85"/><rect x="832.6" y="139.68" width="4.0" height="0.95" fill="#d83a3a" opacity="0.85"/><rect x="837.1" y="139.68" width="1.3" height="0.95" fill="#d83a3a" opacity="0.85"/><rect x="839.1" y="139.68" width="5.9" height="0.95" fill="#d83a3a" opacity="0.85"/><rect x="830" y="140.75" width="31.0" height="1.17" fill="#6a1414"/><rect x="830.0" y="140.85" width="2.0" height="0.95" fill="#d83a3a" opacity="0.85"/><rect x="832.6" y="140.85" width="4.0" height="0.95" fill="#d83a3a" opacity="0.85"/><rect x="837.1" y="140.85" width="1.3" height="0.95" fill="#d83a3a" opacity="0.85"/><rect x="839.1" y="140.85" width="5.9" height="0.95" fill="#d83a3a" opacity="0.85"/><rect x="830" y="141.92" width="56.0" height="1.17" fill="#6a1414"/><rect x="830.0" y="142.02" width="2.0" height="0.95" fill="#d83a3a" opacity="0.85"/><rect x="832.6" y="142.02" width="4.0" height="0.95" fill="#d83a3a" opacity="0.85"/><rect x="837.1" y="142.02" width="1.3" height="0.95" fill="#d83a3a" opacity="0.85"/><rect x="839.1" y="142.02" width="10.6" height="0.95" fill="#d83a3a" opacity="0.85"/><rect x="830" y="143.09" width="25.8" height="1.17" fill="#6a1414"/><rect x="830.0" y="143.19" width="2.0" height="0.95" fill="#d83a3a" opacity="0.85"/><rect x="832.6" y="143.19" width="4.0" height="0.95" fill="#d83a3a" opacity="0.85"/><rect x="837.1" y="143.19" width="1.3" height="0.95" fill="#d83a3a" opacity="0.85"/><rect x="839.1" y="143.19" width="4.6" height="0.95" fill="#d83a3a" opacity="0.85"/><rect x="830" y="144.26" width="29.2" height="1.17" fill="#6a1414"/><rect x="830.0" y="144.36" width="2.0" height="0.95" fill="#d83a3a" opacity="0.85"/><rect x="832.6" y="144.36" width="4.0" height="0.95" fill="#d83a3a" opacity="0.85"/><rect x="837.1" y="144.36" width="1.3" height="0.95" fill="#d83a3a" opacity="0.85"/><rect x="839.1" y="144.36" width="5.3" height="0.95" fill="#d83a3a" opacity="0.85"/><rect x="830" y="145.43" width="24.1" height="1.17" fill="#6a1414"/><rect x="830.0" y="145.53" width="2.0" height="0.95" fill="#d83a3a" opacity="0.85"/><rect x="832.6" y="145.53" width="4.0" height="0.95" fill="#d83a3a" opacity="0.85"/><rect x="837.1" y="145.53" width="1.3" height="0.95" fill="#d83a3a" opacity="0.85"/><rect x="839.1" y="145.53" width="4.6" height="0.95" fill="#d83a3a" opacity="0.85"/><rect x="830" y="146.60" width="31.0" height="1.17" fill="#6a1414"/><rect x="830.0" y="146.70" width="2.0" height="0.95" fill="#d83a3a" opacity="0.85"/><rect x="832.6" y="146.70" width="4.0" height="0.95" fill="#d83a3a" opacity="0.85"/><rect x="837.1" y="146.70" width="1.3" height="0.95" fill="#d83a3a" opacity="0.85"/><rect x="839.1" y="146.70" width="5.9" height="0.95" fill="#d83a3a" opacity="0.85"/><rect x="830" y="147.77" width="20.6" height="1.17" fill="#6a1414"/><rect x="830.0" y="147.87" width="2.0" height="0.95" fill="#d83a3a" opacity="0.85"/><rect x="832.6" y="147.87" width="4.0" height="0.95" fill="#d83a3a" opacity="0.85"/><rect x="837.1" y="147.87" width="1.3" height="0.95" fill="#d83a3a" opacity="0.85"/><rect x="839.1" y="147.87" width="4.0" height="0.95" fill="#d83a3a" opacity="0.85"/><rect x="830.0" y="149.04" width="5.3" height="0.95" fill="#557a46" opacity="0.55"/><rect x="830.0" y="150.21" width="2.0" height="0.95" fill="#9a6a98" opacity="0.55"/><rect x="832.6" y="150.21" width="7.9" height="0.95" fill="#7aa9c4" opacity="0.55"/><rect x="841.1" y="150.21" width="1.3" height="0.95" fill="#9a6a98" opacity="0.55"/><rect x="843.0" y="150.21" width="11.9" height="0.95" fill="#a0725f" opacity="0.55"/><rect x="830.0" y="151.38" width="2.0" height="0.95" fill="#9a6a98" opacity="0.55"/><rect x="832.6" y="151.38" width="9.2" height="0.95" fill="#7aa9c4" opacity="0.55"/><rect x="842.4" y="151.38" width="1.3" height="0.95" fill="#9a6a98" opacity="0.55"/><rect x="844.3" y="151.38" width="13.2" height="0.95" fill="#a0725f" opacity="0.55"/><rect x="830.0" y="152.55" width="2.0" height="0.95" fill="#9a6a98" opacity="0.55"/><rect x="832.6" y="152.55" width="8.6" height="0.95" fill="#7aa9c4" opacity="0.55"/><rect x="841.8" y="152.55" width="1.3" height="0.95" fill="#9a6a98" opacity="0.55"/><rect x="843.7" y="152.55" width="12.5" height="0.95" fill="#a0725f" opacity="0.55"/><rect x="830.0" y="154.89" width="5.3" height="0.95" fill="#557a46" opacity="0.55"/><rect x="830.0" y="156.06" width="1.3" height="0.95" fill="#3f9f8c" opacity="0.55"/><rect x="831.9" y="156.06" width="4.0" height="0.95" fill="#7aa9c4" opacity="0.55"/><rect x="836.5" y="156.06" width="4.6" height="0.95" fill="#7aa9c4" opacity="0.55"/><rect x="841.7" y="156.06" width="0.7" height="0.95" fill="#9a9a9a" opacity="0.55"/><rect x="843.0" y="156.06" width="4.6" height="0.95" fill="#7aa9c4" opacity="0.55"/><rect x="830.0" y="157.23" width="1.3" height="0.95" fill="#3f9f8c" opacity="0.55"/><rect x="831.9" y="157.23" width="4.0" height="0.95" fill="#7aa9c4" opacity="0.55"/><rect x="836.5" y="157.23" width="5.9" height="0.95" fill="#7aa9c4" opacity="0.55"/><rect x="843.0" y="157.23" width="0.7" height="0.95" fill="#9a9a9a" opacity="0.55"/><rect x="844.3" y="157.23" width="5.9" height="0.95" fill="#7aa9c4" opacity="0.55"/><rect x="830.0" y="158.40" width="1.3" height="0.95" fill="#3f9f8c" opacity="0.55"/><rect x="831.9" y="158.40" width="4.0" height="0.95" fill="#7aa9c4" opacity="0.55"/><rect x="836.5" y="158.40" width="7.9" height="0.95" fill="#7aa9c4" opacity="0.55"/><rect x="845.0" y="158.40" width="0.7" height="0.95" fill="#9a9a9a" opacity="0.55"/><rect x="846.3" y="158.40" width="7.9" height="0.95" fill="#7aa9c4" opacity="0.55"/><rect x="830.0" y="159.57" width="1.3" height="0.95" fill="#3f9f8c" opacity="0.55"/><rect x="831.9" y="159.57" width="4.0" height="0.95" fill="#7aa9c4" opacity="0.55"/><rect x="836.5" y="159.57" width="8.6" height="0.95" fill="#7aa9c4" opacity="0.55"/><rect x="845.7" y="159.57" width="0.7" height="0.95" fill="#9a9a9a" opacity="0.55"/><rect x="846.9" y="159.57" width="8.6" height="0.95" fill="#7aa9c4" opacity="0.55"/><rect x="830.0" y="160.74" width="1.3" height="0.95" fill="#3f9f8c" opacity="0.55"/><rect x="831.9" y="160.74" width="4.0" height="0.95" fill="#7aa9c4" opacity="0.55"/><rect x="836.5" y="160.74" width="9.2" height="0.95" fill="#7aa9c4" opacity="0.55"/><rect x="846.3" y="160.74" width="0.7" height="0.95" fill="#9a9a9a" opacity="0.55"/><rect x="847.6" y="160.74" width="9.2" height="0.95" fill="#7aa9c4" opacity="0.55"/><rect x="830.0" y="161.91" width="1.3" height="0.95" fill="#3f9f8c" opacity="0.55"/><rect x="831.9" y="161.91" width="4.0" height="0.95" fill="#7aa9c4" opacity="0.55"/><rect x="836.5" y="161.91" width="7.9" height="0.95" fill="#7aa9c4" opacity="0.55"/><rect x="845.0" y="161.91" width="0.7" height="0.95" fill="#9a9a9a" opacity="0.55"/><rect x="846.3" y="161.91" width="7.9" height="0.95" fill="#7aa9c4" opacity="0.55"/><rect x="830.0" y="163.08" width="1.3" height="0.95" fill="#3f9f8c" opacity="0.55"/><rect x="831.9" y="163.08" width="4.0" height="0.95" fill="#7aa9c4" opacity="0.55"/><rect x="836.5" y="163.08" width="9.9" height="0.95" fill="#7aa9c4" opacity="0.55"/><rect x="847.0" y="163.08" width="0.7" height="0.95" fill="#9a9a9a" opacity="0.55"/><rect x="848.2" y="163.08" width="9.9" height="0.95" fill="#7aa9c4" opacity="0.55"/><rect x="830.0" y="164.25" width="1.3" height="0.95" fill="#3f9f8c" opacity="0.55"/><rect x="831.9" y="164.25" width="4.0" height="0.95" fill="#7aa9c4" opacity="0.55"/><rect x="836.5" y="164.25" width="10.6" height="0.95" fill="#7aa9c4" opacity="0.55"/><rect x="847.6" y="164.25" width="0.7" height="0.95" fill="#9a9a9a" opacity="0.55"/><rect x="848.9" y="164.25" width="10.6" height="0.95" fill="#7aa9c4" opacity="0.55"/><rect x="830.0" y="165.42" width="1.3" height="0.95" fill="#3f9f8c" opacity="0.55"/><rect x="831.9" y="165.42" width="4.0" height="0.95" fill="#7aa9c4" opacity="0.55"/><rect x="836.5" y="165.42" width="5.3" height="0.95" fill="#7aa9c4" opacity="0.55"/><rect x="842.4" y="165.42" width="0.7" height="0.95" fill="#9a9a9a" opacity="0.55"/><rect x="843.6" y="165.42" width="5.3" height="0.95" fill="#7aa9c4" opacity="0.55"/><rect x="830.0" y="166.59" width="1.3" height="0.95" fill="#3f9f8c" opacity="0.55"/><rect x="831.9" y="166.59" width="4.0" height="0.95" fill="#7aa9c4" opacity="0.55"/><rect x="836.5" y="166.59" width="6.6" height="0.95" fill="#7aa9c4" opacity="0.55"/><rect x="843.7" y="166.59" width="0.7" height="0.95" fill="#9a9a9a" opacity="0.55"/><rect x="844.9" y="166.59" width="6.6" height="0.95" fill="#7aa9c4" opacity="0.55"/><rect x="830.0" y="168.93" width="4.6" height="0.95" fill="#557a46" opacity="0.55"/><rect x="830.0" y="170.10" width="1.3" height="0.95" fill="#3f9f8c" opacity="0.55"/><rect x="831.9" y="170.10" width="4.0" height="0.95" fill="#a9a984" opacity="0.55"/><rect x="836.5" y="170.10" width="5.3" height="0.95" fill="#a0725f" opacity="0.55"/><rect x="842.4" y="170.10" width="4.6" height="0.95" fill="#7aa9c4" opacity="0.55"/><rect x="830.0" y="171.27" width="1.3" height="0.95" fill="#3f9f8c" opacity="0.55"/><rect x="831.9" y="171.27" width="4.0" height="0.95" fill="#a9a984" opacity="0.55"/><rect x="836.5" y="171.27" width="7.3" height="0.95" fill="#a0725f" opacity="0.55"/><rect x="844.3" y="171.27" width="6.6" height="0.95" fill="#7aa9c4" opacity="0.55"/><rect x="830.0" y="172.44" width="1.3" height="0.95" fill="#3f9f8c" opacity="0.55"/><rect x="831.9" y="172.44" width="4.0" height="0.95" fill="#a9a984" opacity="0.55"/><rect x="836.5" y="172.44" width="8.6" height="0.95" fill="#a0725f" opacity="0.55"/><rect x="845.7" y="172.44" width="7.9" height="0.95" fill="#7aa9c4" opacity="0.55"/><rect x="830.0" y="173.61" width="1.3" height="0.95" fill="#3f9f8c" opacity="0.55"/><rect x="831.9" y="173.61" width="4.0" height="0.95" fill="#a9a984" opacity="0.55"/><rect x="836.5" y="173.61" width="4.6" height="0.95" fill="#a0725f" opacity="0.55"/><rect x="841.7" y="173.61" width="4.0" height="0.95" fill="#7aa9c4" opacity="0.55"/><rect x="830.0" y="174.78" width="1.3" height="0.95" fill="#3f9f8c" opacity="0.55"/><rect x="831.9" y="174.78" width="4.0" height="0.95" fill="#a9a984" opacity="0.55"/><rect x="836.5" y="174.78" width="7.3" height="0.95" fill="#a0725f" opacity="0.55"/><rect x="844.3" y="174.78" width="6.6" height="0.95" fill="#7aa9c4" opacity="0.55"/><rect x="830.0" y="175.95" width="1.3" height="0.95" fill="#3f9f8c" opacity="0.55"/><rect x="831.9" y="175.95" width="4.0" height="0.95" fill="#a9a984" opacity="0.55"/><rect x="836.5" y="175.95" width="7.9" height="0.95" fill="#a0725f" opacity="0.55"/><rect x="845.0" y="175.95" width="7.3" height="0.95" fill="#7aa9c4" opacity="0.55"/><rect x="830.0" y="178.29" width="1.3" height="0.95" fill="#3f9f8c" opacity="0.55"/><rect x="831.9" y="178.29" width="2.0" height="0.95" fill="#a9a984" opacity="0.55"/><rect x="834.5" y="178.29" width="4.0" height="0.95" fill="#7aa9c4" opacity="0.55"/><rect x="830.0" y="181.80" width="1.3" height="0.95" fill="#3f9f8c" opacity="0.55"/><rect x="831.9" y="181.80" width="1.3" height="0.95" fill="#7aa9c4" opacity="0.55"/><rect x="830.0" y="182.97" width="4.0" height="0.95" fill="#7aa9c4" opacity="0.55"/><rect x="834.6" y="182.97" width="3.3" height="0.95" fill="#a9a984" opacity="0.55"/><rect x="830.0" y="185.31" width="1.3" height="0.95" fill="#557a46" opacity="0.55"/><rect x="830.0" y="186.48" width="15.8" height="0.95" fill="#557a46" opacity="0.55"/><rect x="830.0" y="187.65" width="14.5" height="0.95" fill="#557a46" opacity="0.55"/><rect x="830.0" y="188.82" width="10.6" height="0.95" fill="#557a46" opacity="0.55"/><rect x="830.0" y="189.99" width="0.7" height="0.95" fill="#557a46" opacity="0.55"/><rect x="830.0" y="191.16" width="25.1" height="0.95" fill="#557a46" opacity="0.55"/><rect x="830.0" y="192.33" width="17.2" height="0.95" fill="#557a46" opacity="0.55"/><rect x="830.0" y="193.50" width="1.3" height="0.95" fill="#557a46" opacity="0.55"/><rect x="830.0" y="195.84" width="1.3" height="0.95" fill="#3f9f8c" opacity="0.55"/><rect x="831.9" y="195.84" width="2.0" height="0.95" fill="#a9a984" opacity="0.55"/><rect x="834.5" y="195.84" width="3.3" height="0.95" fill="#7aa9c4" opacity="0.55"/><rect x="838.4" y="195.84" width="0.7" height="0.95" fill="#9a9a9a" opacity="0.55"/><rect x="831.2" y="197.01" width="2.0" height="0.95" fill="#7aa9c4" opacity="0.55"/><rect x="833.8" y="197.01" width="3.3" height="0.95" fill="#7aa9c4" opacity="0.55"/><rect x="837.7" y="197.01" width="1.3" height="0.95" fill="#a9a984" opacity="0.55"/><rect x="839.6" y="197.01" width="2.6" height="0.95" fill="#a0725f" opacity="0.55"/><rect x="842.8" y="197.01" width="1.3" height="0.95" fill="#9a9a9a" opacity="0.55"/><rect x="844.8" y="197.01" width="3.3" height="0.95" fill="#a0725f" opacity="0.55"/><rect x="848.7" y="197.01" width="13.2" height="0.95" fill="#557a46" opacity="0.55"/><rect x="830.0" y="198.18" width="0.7" height="0.95" fill="#9a9a9a" opacity="0.55"/><rect x="830.0" y="200.52" width="1.3" height="0.95" fill="#3f9f8c" opacity="0.55"/><rect x="831.9" y="200.52" width="7.9" height="0.95" fill="#7aa9c4" opacity="0.55"/><rect x="840.4" y="200.52" width="0.7" height="0.95" fill="#9a9a9a" opacity="0.55"/><rect x="841.7" y="200.52" width="2.6" height="0.95" fill="#4a7fae" opacity="0.55"/><rect x="830.0" y="202.86" width="1.3" height="0.95" fill="#4a7fae" opacity="0.55"/><rect x="831.9" y="202.86" width="2.0" height="0.95" fill="#3f9f8c" opacity="0.55"/><rect x="834.5" y="202.86" width="0.7" height="0.95" fill="#9a9a9a" opacity="0.55"/><rect x="831.2" y="204.03" width="1.3" height="0.95" fill="#7aa9c4" opacity="0.55"/><rect x="833.1" y="204.03" width="2.0" height="0.95" fill="#a0725f" opacity="0.55"/><rect x="831.2" y="205.20" width="2.6" height="0.95" fill="#7aa9c4" opacity="0.55"/><rect x="831.2" y="206.37" width="2.6" height="0.95" fill="#7aa9c4" opacity="0.55"/><rect x="831.2" y="207.54" width="3.3" height="0.95" fill="#7aa9c4" opacity="0.55"/><rect x="835.1" y="207.54" width="3.3" height="0.95" fill="#a9a984" opacity="0.55"/><rect x="839.0" y="207.54" width="2.0" height="0.95" fill="#7aa9c4" opacity="0.55"/><rect x="830.0" y="208.71" width="0.7" height="0.95" fill="#9a9a9a" opacity="0.55"/><rect x="830" y="182.2" width="56" height="1" fill="#264f78"/></svg>
<div class="abs" style="left:885.5px;top:110px;width:1px;height:448px;background:#2b2b2b"></div>
<div class="abs" style="left:886px;top:280.5px;width:10.5px;height:123px;background:#4b4b4b"></div>
<div class="abs" style="left:886px;top:344px;width:10.5px;height:1px;background:#c0c0c0"></div>
<div class="abs" style="left:886px;top:346px;width:3px;height:3.4px;background:#587c0c"></div>
<div class="abs" style="left:893.2px;top:184px;width:3.3px;height:11.4px;background:#d21f1f"></div>
<div class="abs" style="left:893.2px;top:199.5px;width:3.3px;height:3.5px;background:#d21f1f"></div>
<div class="abs" style="left:893.2px;top:207px;width:3.3px;height:3.5px;background:#d21f1f"></div>
<div class="abs" style="left:893.2px;top:214.5px;width:3.3px;height:3.5px;background:#d21f1f"></div>
<div class="abs" style="left:893.2px;top:222px;width:3.3px;height:3.5px;background:#d21f1f"></div>
<div class="abs" style="left:893.2px;top:230px;width:3.3px;height:4.0px;background:#d21f1f"></div>
<div class="abs" style="left:884px;top:312px;width:13px;height:22px;background:#3a3a3a"></div>
<svg class="abs" style="left:886.5px;top:318.5px" width="8" height="9" viewBox="0 0 8 9"><path d="M1.4 0.8 L6.4 4.5 L1.4 8.2" stroke="#e6e6e6" stroke-width="1" fill="none"/></svg>
<div class="abs" style="left:897px;top:50px;width:219px;height:20px;background:#3b3f42"></div>
<div class="abs rt" style="left:919px;top:52px;width:21px;height:16px;line-height:16px;font-size:9.6px;color:#e4e4e4">文件</div>
<svg class="abs" style="left:919px;top:84.5px" width="10" height="9" viewBox="0 0 10 9"><path d="M5 0.4 L0.2 4.6 L0.9 5.3 L5 1.8 L9.1 5.3 L9.8 4.6 L8.2 3.2 V0.9 H7 V2.1 Z" fill="#d8d8d8"/><path d="M5 2.6 L1.7 5.4 V8.6 H4.1 V6.2 H5.9 V8.6 H8.3 V5.4 Z" fill="#d8d8d8"/></svg>
<div class="abs" style="left:919px;top:102px;width:179px;height:1px;background:#9a9a9a"></div>
<div class="abs" style="left:919px;top:117.5px;width:86px;height:23px;border:1px solid #565656;border-radius:2px"></div>
<div class="abs rt" style="left:930px;top:121px;width:53px;height:16px;line-height:16px;font-size:10.4px;color:#d6d6d6">返回上一级</div>
<svg class="abs" style="left:985px;top:124.5px" width="10" height="9" viewBox="0 0 10 9"><path d="M4.6 0.4 L0.4 4.5 L4.6 8.6 L5.7 7.5 L3.5 5.4 H9.6 V3.6 H3.5 L5.7 1.5 Z" fill="#e0e0e0"/></svg>
<div class="abs" style="left:1008px;top:117.5px;width:77px;height:23px;border:1px solid #565656;border-radius:2px"></div>
<div class="abs rt" style="left:1019.4px;top:121px;width:42px;height:16px;line-height:16px;font-size:10.2px;color:#d6d6d6">上传文件</div>
<svg class="abs" style="left:1063px;top:124px" width="10" height="10" viewBox="0 0 10 10"><path d="M5 0.3 L1.6 3.8 H3.7 V6.4 H6.3 V3.8 H8.4 Z" fill="#e0e0e0"/><path d="M0.4 7 H3 V7.6 H7 V7 H9.6 V9.7 H0.4 Z" fill="#e0e0e0"/></svg>
<div class="abs rt" style="left:924.7px;top:162px;width:32px;height:16px;line-height:16px;font-size:10px;font-weight:bold;color:#eaeaea">文件名</div>
<div class="abs rt" style="left:1051px;top:162px;width:42px;height:16px;line-height:16px;font-size:10.2px;font-weight:bold;color:#eaeaea">文件大小</div>
<div class="abs" style="left:919px;top:180.5px;width:179px;height:1px;background:#585858"></div>
<svg class="abs" style="left:924.5px;top:191.5px" width="11" height="9" viewBox="0 0 11 9"><path d="M0.3 1.2 Q0.3 0.5 1 0.5 H3.6 L4.6 1.6 H8 Q8.7 1.6 8.7 2.3 V3 H2.6 Q2 3 1.7 3.6 L0.3 6.6 Z" fill="#c9c9c9"/><path d="M2.8 3.7 H10.4 Q10.9 3.7 10.6 4.2 L8.9 8 Q8.7 8.5 8.2 8.5 H0.6 Z" fill="#c9c9c9"/></svg>
<div class="abs rt" style="left:943.3px;top:188px;height:16px;line-height:16px;font-size:10.2px;color:#bdbdbd">ruoyi-vue-vs</div>
<div class="abs rt" style="left:1051.3px;top:188px;height:16px;line-height:16px;font-size:10.2px;color:#bdbdbd">~ 0 B</div>
<div class="abs" style="left:897px;top:312px;width:219px;height:22px;background:#3b3f42"></div>
<div class="abs rt" style="left:919px;top:315px;width:21px;height:16px;line-height:16px;font-size:9.6px;color:#e4e4e4">端口</div>
<div class="abs rt" style="left:919px;top:343px;width:64px;height:16px;line-height:16px;font-size:10.3px;color:#d0d0d0">暂无可用端口</div>
<div class="abs" style="left:896.3px;top:70px;width:1px;height:488px;background:#343434"></div>
<div class="abs wm" style="left:44px;top:103px">demo@titanide.cn</div>
<div class="abs wm" style="left:44px;top:249px">demo@titanide.cn</div>
<div class="abs wm" style="left:44px;top:395px">demo@titanide.cn</div>
<div class="abs wm" style="left:44px;top:540px">demo@titanide.cn</div>
<div class="abs wm" style="left:336px;top:103px">demo@titanide.cn</div>
<div class="abs wm" style="left:336px;top:249px">demo@titanide.cn</div>
<div class="abs wm" style="left:336px;top:395px">demo@titanide.cn</div>
<div class="abs wm" style="left:336px;top:540px">demo@titanide.cn</div>
<div class="abs wm" style="left:628px;top:103px">demo@titanide.cn</div>
<div class="abs wm" style="left:628px;top:249px">demo@titanide.cn</div>
<div class="abs wm" style="left:628px;top:395px">demo@titanide.cn</div>
<div class="abs wm" style="left:628px;top:540px">demo@titanide.cn</div>
<div class="abs wm" style="left:920px;top:103px">demo@titanide.cn</div>
<div class="abs wm" style="left:920px;top:249px">demo@titanide.cn</div>
<div class="abs wm" style="left:920px;top:395px">demo@titanide.cn</div>
<div class="abs wm" style="left:920px;top:540px">demo@titanide.cn</div>
</body>
</html>
